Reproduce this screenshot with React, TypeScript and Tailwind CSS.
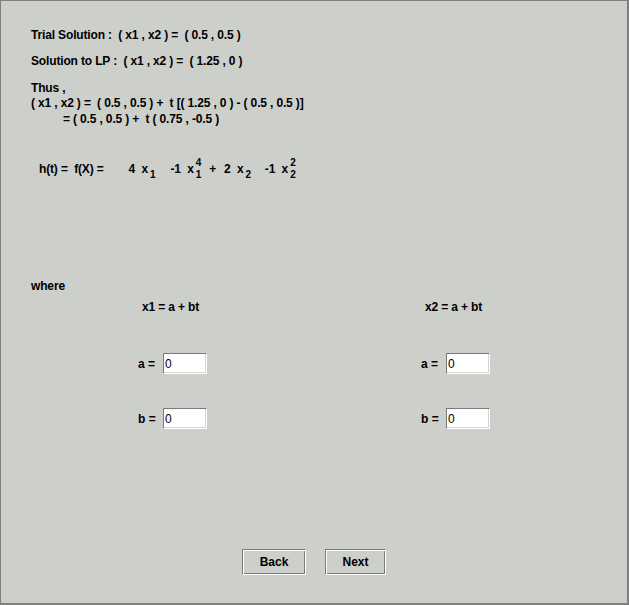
import React from 'react';

const font = { fontFamily: '"Liberation Sans", Arial, sans-serif' };

const Line: React.FC<{ className?: string; children: React.ReactNode }> = ({ className = '', children }) => (
  <div className={`h-[14px] leading-[14px] whitespace-pre text-[12px] font-bold tracking-[-0.15px] text-black ${className}`}>{children}</div>
);

// x with stacked super/subscript
const Var: React.FC<{ sub: string; sup?: string }> = ({ sub, sup }) => (
  <span className="whitespace-pre">
    x
    <span className="inline-block align-[-5px] ml-[2px] text-[10px] leading-[12px]">
      {sup && <span className="block">{sup}</span>}
      <span className="block">{sub}</span>
    </span>
  </span>
);

const Field: React.FC<{ label: string }> = ({ label }) => (
  <div className="flex items-center h-[21px]">
    <span className="w-[25px] text-[12px] font-bold whitespace-pre">{label}</span>
    <input
      defaultValue="0"
      className="w-[44px] h-[21px] bg-white border border-t-[#7a7a7a] border-l-[#7a7a7a] border-b-white border-r-white shadow-[inset_-1px_-1px_0_#d4d4d4] pl-[1px] text-[12px] text-black outline-none"
      style={font}
    />
  </div>
);

const Column: React.FC<{ name: string; className?: string }> = ({ name, className = '' }) => (
  <div className={`shrink-0 flex flex-col ${className}`}>
    <Line className="ml-[4px]">{name} = a + bt</Line>
    <div className="mt-[39px]"><Field label="a =" /></div>
    <div className="mt-[34px]"><Field label="b =" /></div>
  </div>
);

const Btn: React.FC<{ label: string; w: string }> = ({ label, w }) => (
  <button
    className={`${w} h-[26px] bg-[#cdcfcb] border border-t-[#7a7a7a] border-l-[#7a7a7a] border-b-white border-r-white shadow-[inset_1px_1px_0_#ffffff,inset_-1px_-1px_0_#7a7a7a] text-[12px] font-bold text-black`}
    style={font}
  >
    {label}
  </button>
);

export default function App() {
  return (
    <div
      className="w-[629px] h-[605px] bg-[#cdcfcb] border-l border-t border-r-2 border-b-2 border-[#7f7f7f] flex flex-col text-black overflow-hidden"
      style={font}
    >
      <div className="pl-[30px] pt-[27px]">
        <Line>Trial Solution :  ( x1 , x2 ) =  ( 0.5 , 0.5 )</Line>
        <Line className="mt-[12px]">Solution to LP :  ( x1 , x2 ) =  ( 1.25 , 0 )</Line>
        <Line className="mt-[13px]">Thus ,</Line>
        <Line className="mt-[1px]">( x1 , x2 ) =  ( 0.5 , 0.5 ) +  t [( 1.25 , 0 ) - ( 0.5 , 0.5 )]</Line>
        <Line className="mt-[2px] pl-[32px]">= ( 0.5 , 0.5 ) +  t ( 0.75 , -0.5 )</Line>
      </div>

      <div className="pl-[38px] mt-[31px] h-[30px] flex items-baseline text-[12px] font-bold tracking-[-0.15px] whitespace-pre">
        <span>h(t) =  f(X) =</span>
        <span className="ml-[25px]">4  </span>
        <Var sub="1" />
        <span className="ml-[15px]">-1  </span>
        <Var sub="1" sup="4" />
        <span className="ml-[8px]">+</span>
        <span className="ml-[8px]">2  </span>
        <Var sub="2" />
        <span className="ml-[14px]">-1  </span>
        <Var sub="2" sup="2" />
      </div>

      <Line className="ml-[30px] mt-[92px]">where</Line>

      <div className="flex pl-[137px] mt-[7px]">
        <Column name="x1" className="w-[283px]" />
        <Column name="x2" />
      </div>

      <div className="flex gap-[19px] mt-[120px] pl-[241px]">
        <Btn label="Back" w="w-[64px]" />
        <Btn label="Next" w="w-[61px]" />
      </div>
    </div>
  );
}
